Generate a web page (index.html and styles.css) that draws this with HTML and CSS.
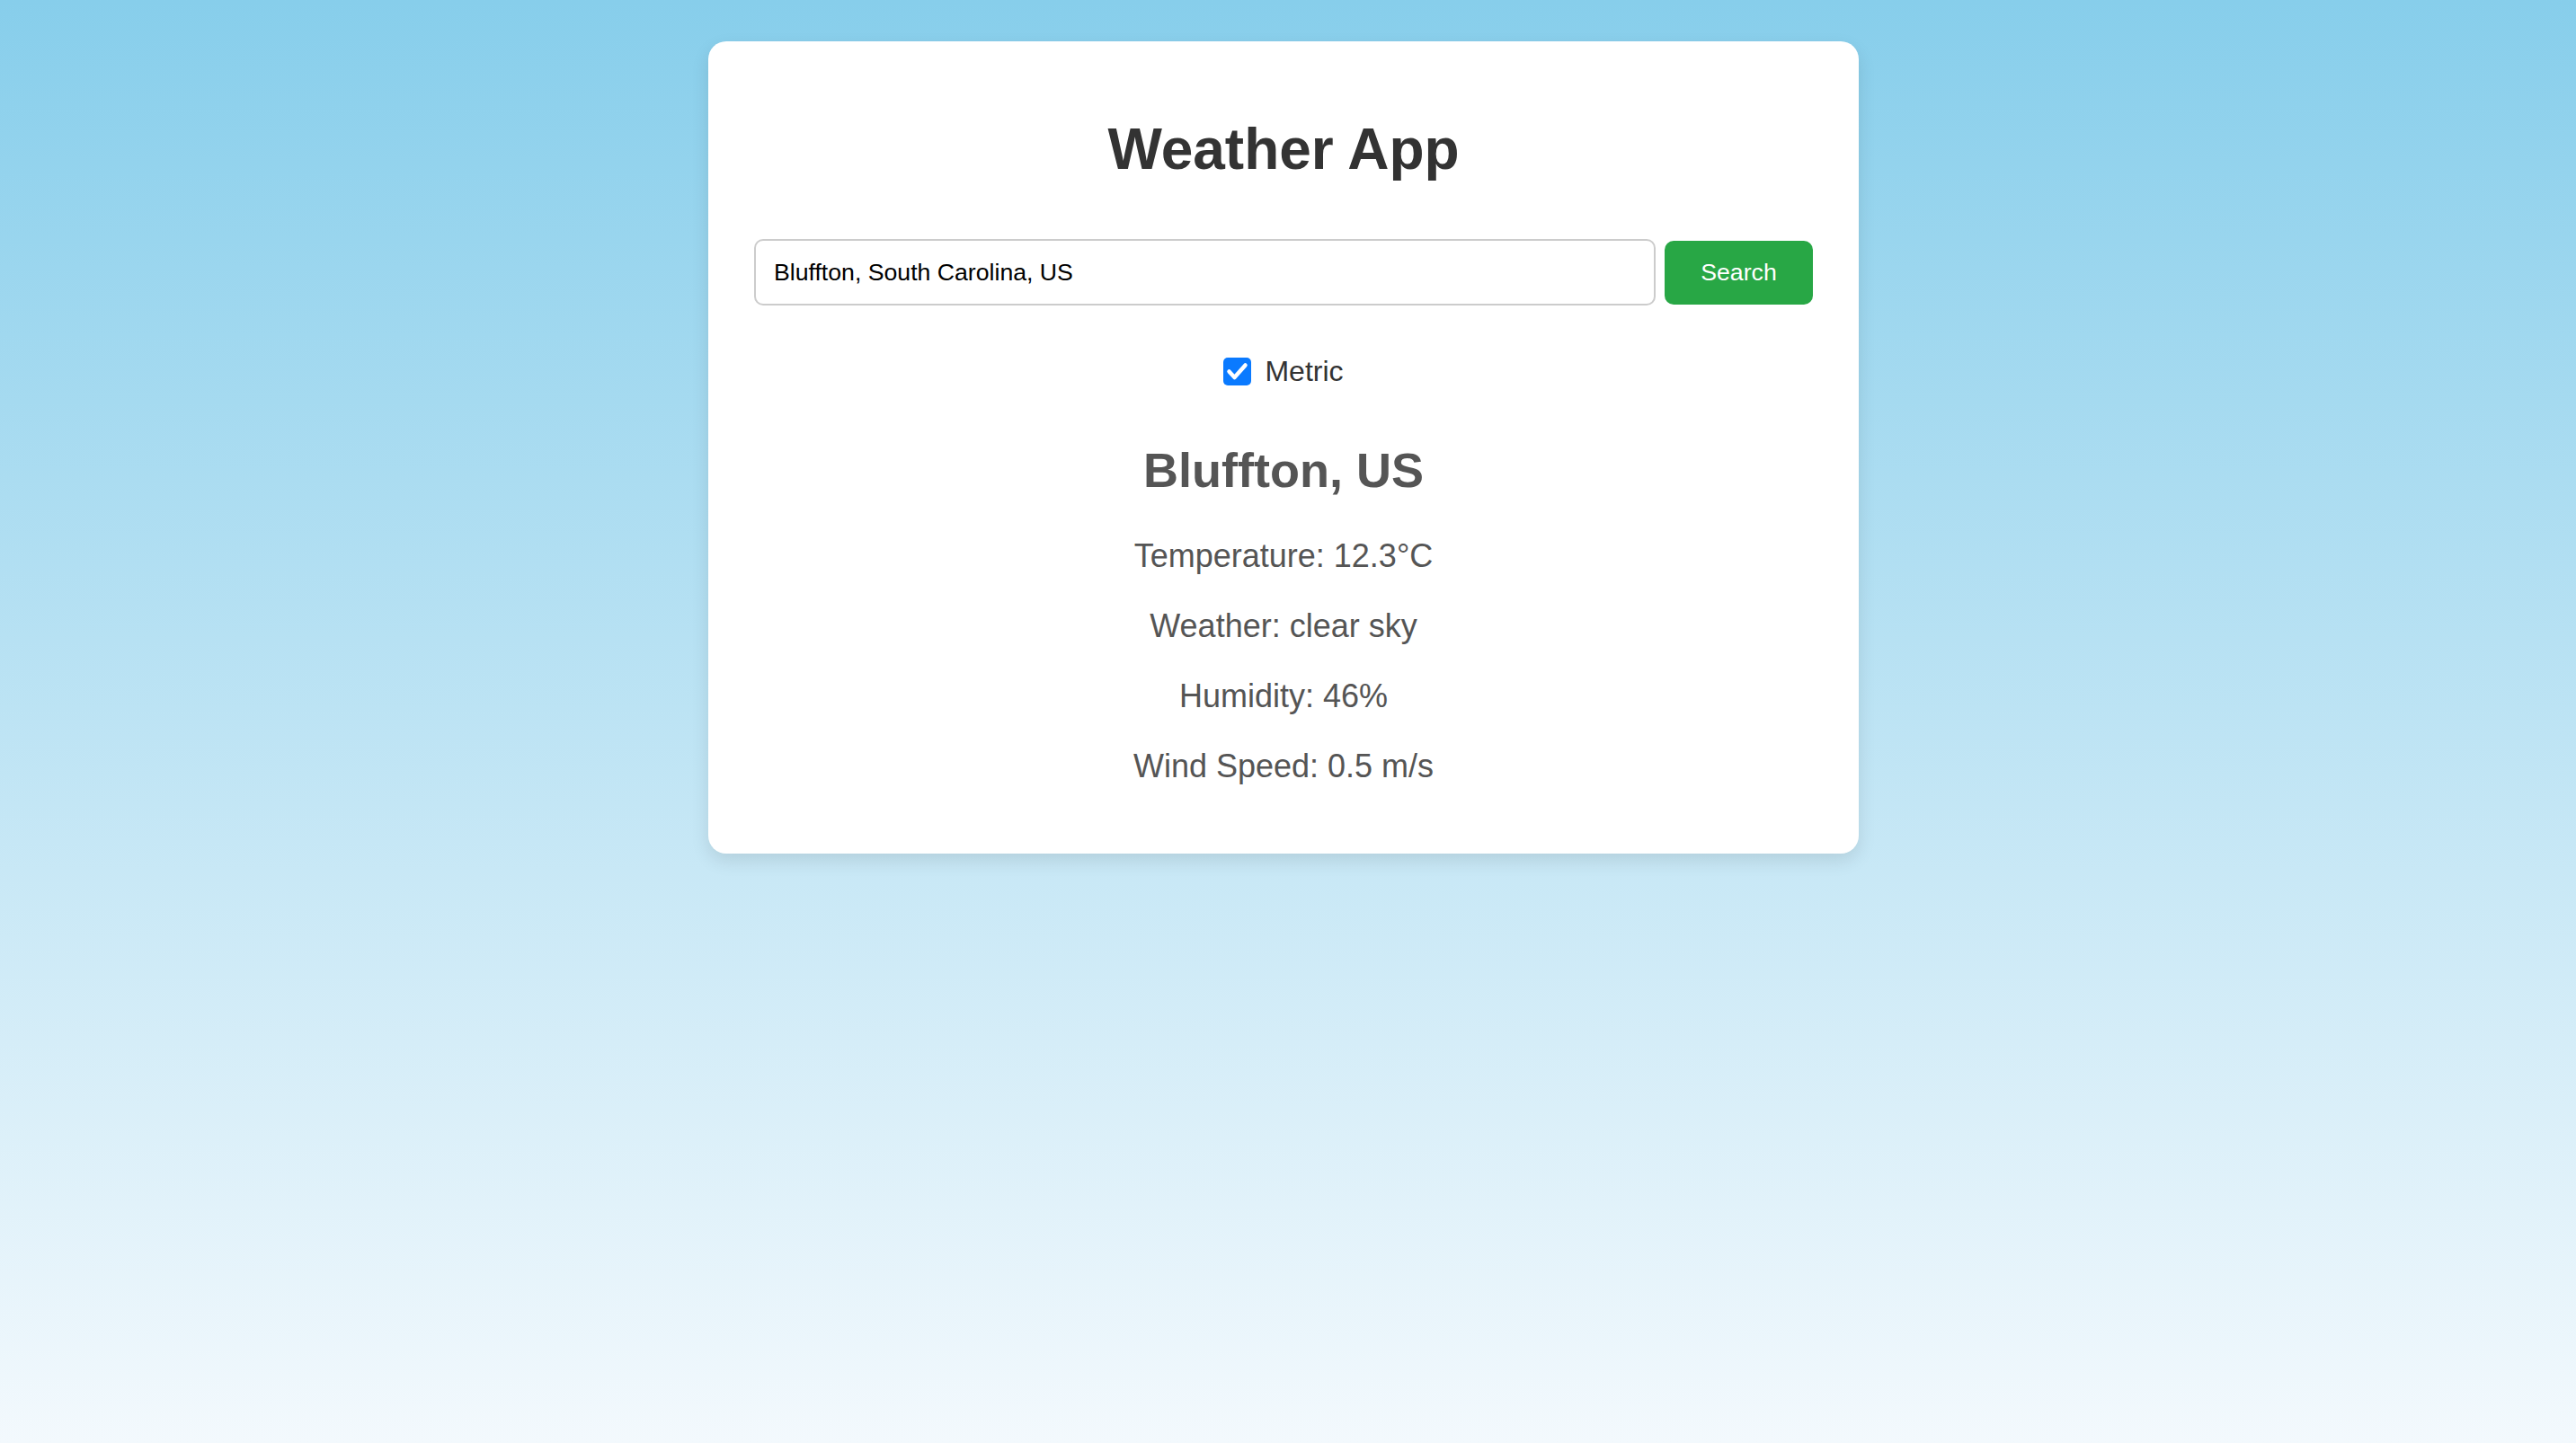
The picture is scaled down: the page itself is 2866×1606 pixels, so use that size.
FILE: index.html
```html
<!DOCTYPE html>
<html lang="en">
<head>
<meta charset="utf-8">
<title>Weather App</title>
<link rel="stylesheet" href="styles.css">
</head>
<body>
<div class="card">
  <h1 class="title">Weather App</h1>
  <div class="search">
    <input class="city" type="text" value="Bluffton, South Carolina, US">
    <button class="btn" type="button">Search</button>
  </div>
  <label class="units">
    <span class="check"><svg width="31" height="31" viewBox="0 0 31 31"><rect x="0" y="0" width="31" height="31" rx="5" fill="#0a7aff"/><polyline points="6.5,15.5 12.5,22 24.5,8.5" fill="none" stroke="#fff" stroke-width="4.5" stroke-linecap="round" stroke-linejoin="round"/></svg></span>
    <span class="units-label">Metric</span>
  </label>
  <div class="result">
    <h2 class="place">Bluffton, US</h2>
    <p class="stat">Temperature: 12.3°C</p>
    <p class="stat">Weather: clear sky</p>
    <p class="stat">Humidity: 46%</p>
    <p class="stat">Wind Speed: 0.5 m/s</p>
  </div>
</div>
</body>
</html>
```
FILE: styles.css
```css
html {
  height: 100%;
}
body {
  margin: 0;
  padding: 0 10px 0 0;
  min-height: 100%;
  background: linear-gradient(to bottom, #87ceeb, #f3f9fd);
  font-family: "Liberation Sans", Arial, Helvetica, sans-serif;
}
.card {
  box-sizing: border-box;
  width: 1280px;
  margin: 46px auto 0;
  padding: 40px;
  background: #fff;
  border-radius: 20px;
  box-shadow: 0 8px 20px rgba(0, 0, 0, 0.1);
  text-align: center;
}
.title {
  margin: 43px 0 63px;
  font-size: 64px;
  font-weight: bold;
  line-height: 74px;
  color: #333;
}
.search {
  display: flex;
  justify-content: center;
  align-items: center;
  gap: 10px;
}
.city {
  box-sizing: border-box;
  width: 1003px;
  height: 74px;
  margin: 0;
  padding: 0 20px;
  border: 2px solid #ccc;
  border-radius: 10px;
  font-family: "Liberation Sans", Arial, Helvetica, sans-serif;
  font-size: 26.67px;
  color: #000;
  background: #fff;
  outline: none;
}
.btn {
  box-sizing: border-box;
  width: 165px;
  height: 71px;
  margin: 0;
  padding: 0;
  border: none;
  border-radius: 10px;
  background: #28a745;
  color: #fff;
  font-family: "Liberation Sans", Arial, Helvetica, sans-serif;
  font-size: 26.67px;
}
.units {
  display: flex;
  justify-content: center;
  align-items: center;
  gap: 15px;
  height: 37px;
  margin-top: 55px;
  font-size: 32px;
  color: #333;
}
.check {
  display: block;
  width: 31px;
  height: 31px;
}
.check svg {
  display: block;
}
.units-label {
  line-height: 37px;
}
.result {
  margin-top: 60px;
  color: #555;
}
.place {
  margin: 0 0 44px;
  font-size: 54px;
  font-weight: bold;
  line-height: 62px;
}
.stat {
  margin: 36.6px 0;
  font-size: 36px;
  line-height: 41.4px;
}
.stat:last-child {
  margin-bottom: 36.6px;
}
```
